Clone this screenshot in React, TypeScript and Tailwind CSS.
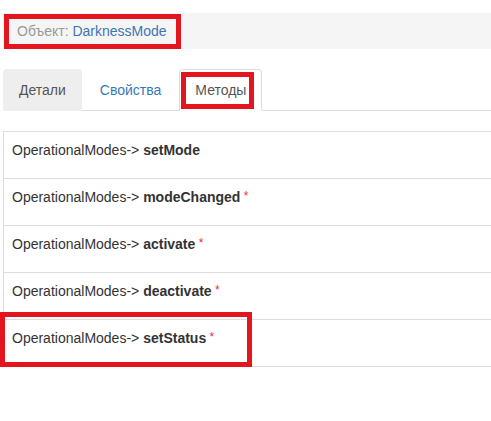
import React from 'react';

const methods = [
  { name: 'setMode', required: false },
  { name: 'modeChanged', required: true },
  { name: 'activate', required: true },
  { name: 'deactivate', required: true },
  { name: 'setStatus', required: true },
];

export default function App() {
  return (
    <div className="relative w-[491px] h-[421px] overflow-hidden bg-white text-[14px] leading-[20px] text-[#333] font-['Liberation_Sans',Arial,sans-serif]">
      <div className="pl-[3px] pt-[13px]">
        {/* Object header */}
        <div className="h-[36px] bg-[#f5f5f5] py-[8px] pl-[14px] mb-[20px]">
          <span className="text-[#999]">Объект: </span>
          <span className="text-[#3c76b4]">DarknessMode</span>
        </div>

        {/* Tabs */}
        <div className="flex h-[42px] border-b border-[#ddd]">
          <div className="h-[42px] px-[15px] py-[10px] mr-[2px] border border-transparent rounded-t-[4px] bg-[#eee] text-[#555]">
            Детали
          </div>
          <div className="h-[42px] px-[15px] py-[10px] mr-[2px] border border-transparent rounded-t-[4px] text-[#337ab7]">
            Свойства
          </div>
          <div className="h-[42px] px-[15px] py-[10px] border border-[#ddd] border-b-white rounded-t-[4px] bg-white text-[#555]">
            Методы
          </div>
        </div>

        {/* Methods list */}
        <div className="mt-[20px] border-l border-[#ddd]">
          {methods.map((m, i) => (
            <div
              key={m.name}
              className={`h-[47px] border-t border-[#ddd] px-[8px] pt-[8px] ${i === methods.length - 1 ? 'border-b h-[48px]' : ''}`}
            >
              OperationalModes-&gt; <b className="font-bold">{m.name}</b>
              {m.required && (
                <span className="text-[#e4303a] text-[12px] align-top relative top-[-1px]"> *</span>
              )}
            </div>
          ))}
        </div>
      </div>

      {/* Annotation boxes */}
      <div className="absolute left-[4px] top-[14px] w-[177px] h-[35px] border-[5px] border-[#e3151f]" />
      <div className="absolute left-[181px] top-[72px] w-[73px] h-[37px] border-[5px] border-[#e3151f]" />
      <div className="absolute left-0 top-[312px] w-[252px] h-[55px] border-[5px] border-[#e3151f]" />
    </div>
  );
}
